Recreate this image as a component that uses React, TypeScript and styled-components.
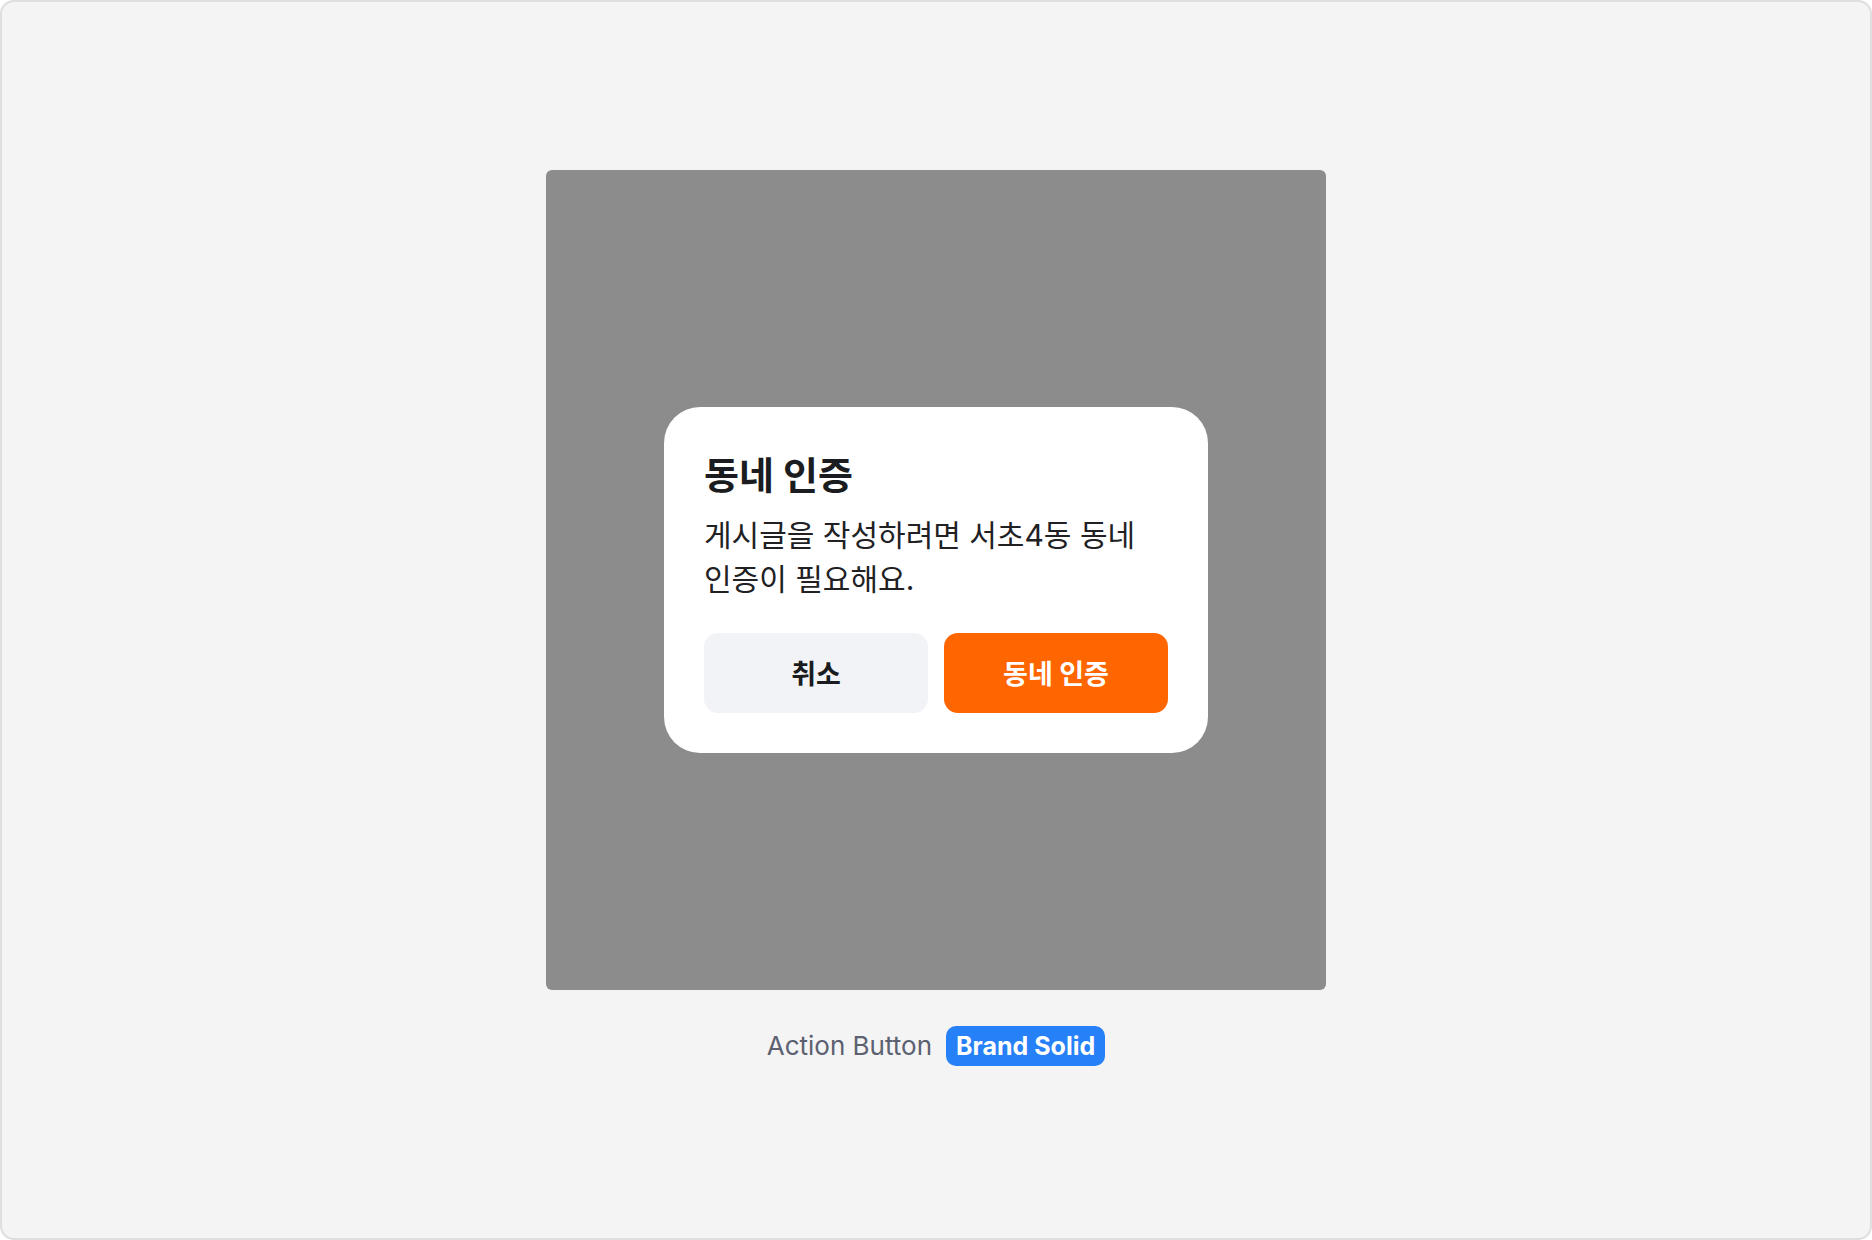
import React from 'react';
import styled, {createGlobalStyle} from 'styled-components';

const FONT = `Inter, "Noto Sans CJK KR", "Noto Sans", sans-serif`;

const GlobalStyle = createGlobalStyle`
  html, body {
    margin: 0;
    padding: 0;
    background: #ffffff;
  }

  * {
    box-sizing: border-box;
  }
`;

type ActionButtonProps = {
    label: string,
    variant: 'neutral' | 'brand'
}

function ActionButton({label, variant}: ActionButtonProps) {
    return <Button variant={variant}>{label}</Button>;
}

export default function App() {
    return (
        <>
            <GlobalStyle/>
            <Frame>
                <Showcase>
                    <Backdrop>
                        <Dialog>
                            <Title>동네 인증</Title>
                            <Description>게시글을 작성하려면 서초4동 동네 인증이 필요해요.</Description>
                            <ButtonRow>
                                <ActionButton label="취소" variant="neutral"/>
                                <ActionButton label="동네 인증" variant="brand"/>
                            </ButtonRow>
                        </Dialog>
                    </Backdrop>
                    <Caption>
                        <CaptionText>Action Button</CaptionText>
                        <Badge>Brand Solid</Badge>
                    </Caption>
                </Showcase>
            </Frame>
        </>
    );
}

const Frame = styled.div`
  width: 100vw;
  height: 100vh;
  padding-bottom: 5px;
  display: flex;
  align-items: center;
  justify-content: center;
  background: #f4f4f4;
  border: 2px solid #dedede;
  border-radius: 14px;
  font-family: ${FONT};
`;

const Showcase = styled.div`
  display: flex;
  flex-direction: column;
  align-items: center;
  gap: 36px;
`;

const Backdrop = styled.div`
  width: 780px;
  height: 820px;
  display: flex;
  align-items: center;
  justify-content: center;
  background: #8c8c8c;
  border-radius: 6px;
`;

const Dialog = styled.div`
  width: 544px;
  padding: 40px;
  display: flex;
  flex-direction: column;
  background: #ffffff;
  border-radius: 36px;
`;

const Title = styled.h2`
  margin: 0 0 10px;
  font-size: 38px;
  line-height: 56px;
  font-weight: 700;
  color: #1a1c20;
`;

const Description = styled.p`
  margin: 0;
  font-size: 30px;
  line-height: 44px;
  font-weight: 400;
  color: #212124;
  word-break: keep-all;
`;

const ButtonRow = styled.div`
  margin-top: 32px;
  display: grid;
  grid-template-columns: 1fr 1fr;
  gap: 16px;
`;

const Button = styled.button<{ variant: 'neutral' | 'brand' }>`
  height: 80px;
  border: none;
  border-radius: 14px;
  font-family: ${FONT};
  font-size: 27px;
  font-weight: 700;
  cursor: pointer;
  background: ${({variant}) => (variant === 'brand' ? '#ff6600' : '#f2f3f6')};
  color: ${({variant}) => (variant === 'brand' ? '#ffffff' : '#1a1c20')};
`;

const Caption = styled.div`
  height: 40px;
  display: flex;
  align-items: center;
  gap: 14px;
`;

const CaptionText = styled.span`
  font-size: 26px;
  color: #5b6170;
`;

const Badge = styled.span`
  height: 40px;
  padding: 0 10px;
  display: flex;
  align-items: center;
  font-size: 25px;
  font-weight: 700;
  color: #ffffff;
  background: #2680f8;
  border-radius: 10px;
`;
